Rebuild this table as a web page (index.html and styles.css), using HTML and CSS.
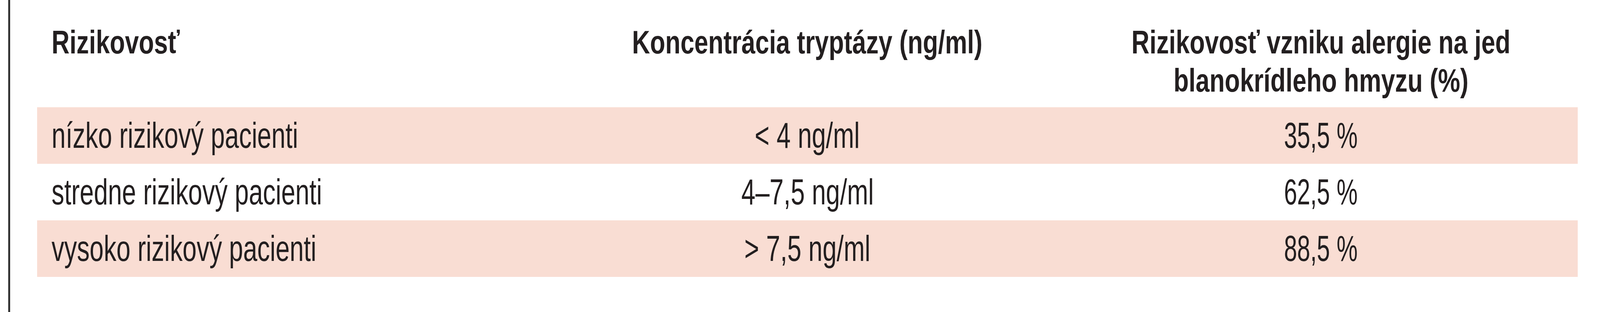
FILE: index.html
```html
<!DOCTYPE html>
<html lang="sk">
<head>
<meta charset="utf-8">
<title>Rizikovosť</title>
<link rel="stylesheet" href="styles.css">
</head>
<body>
<div class="page">
  <div class="rule"></div>
  <table class="risk">
    <colgroup>
      <col class="col"><col class="col"><col class="col">
    </colgroup>
    <thead>
      <tr>
        <th class="left"><span class="t">Rizikovosť</span></th>
        <th><span class="t">Koncentrácia tryptázy (ng/ml)</span></th>
        <th><span class="t">Rizikovosť vzniku alergie na jed<br>blanokrídleho hmyzu (%)</span></th>
      </tr>
    </thead>
    <tbody>
      <tr class="shade">
        <td class="left"><span class="t">nízko rizikový pacienti</span></td>
        <td><span class="t">&lt; 4 ng/ml</span></td>
        <td><span class="t num">35,5 %</span></td>
      </tr>
      <tr>
        <td class="left"><span class="t">stredne rizikový pacienti</span></td>
        <td><span class="t">4–7,5 ng/ml</span></td>
        <td><span class="t num">62,5 %</span></td>
      </tr>
      <tr class="shade">
        <td class="left"><span class="t">vysoko rizikový pacienti</span></td>
        <td><span class="t">&gt; 7,5 ng/ml</span></td>
        <td><span class="t num">88,5 %</span></td>
      </tr>
    </tbody>
  </table>
</div>
</body>
</html>
```

FILE: styles.css
```css
:root {
  /* horizontal factor: window width relative to the 5069px design */
  --k: 0.808;
}

@media (min-width: 4600px) {
  :root { --k: 1; }
}

html, body {
  margin: 0;
  padding: 0;
  background: #ffffff;
}

.page {
  display: flex;
  align-items: flex-start;
  height: 800px;
  overflow: hidden;
  font-family: "Liberation Sans", Arial, sans-serif;
  color: #231f20;
}

.rule {
  flex: none;
  width: 0.118vw;
  height: 800px;
  margin-left: 0.513vw;
  background: #333333;
}

.risk {
  flex: none;
  margin-left: 1.697vw;
  width: 96.27vw;
  table-layout: fixed;
  border-collapse: collapse;
  border-spacing: 0;
}

.col { width: 33.333%; }

.t {
  display: inline-block;
  white-space: nowrap;
  transform-origin: 50% 50%;
}

.risk th {
  font-weight: bold;
  font-size: 84px;
  line-height: 98px;
  text-align: center;
  vertical-align: top;
  padding: 59px 0 20px 0;
}

.risk th .t {
  transform: scaleX(calc(var(--k) * 0.94));
}

.risk td {
  font-size: 92px;
  line-height: 145px;
  height: 145px;
  text-align: center;
  vertical-align: top;
  padding: 0;
}

.risk td .t {
  transform: scaleX(calc(var(--k) * 0.873));
}

.risk td .t.num {
  transform: scaleX(calc(var(--k) * 0.815));
}

.risk .left {
  text-align: left;
  padding-left: 0.888vw;
}

.risk .left .t {
  transform-origin: 0 50%;
}

.shade td {
  background: #f9ddd3;
}
```
